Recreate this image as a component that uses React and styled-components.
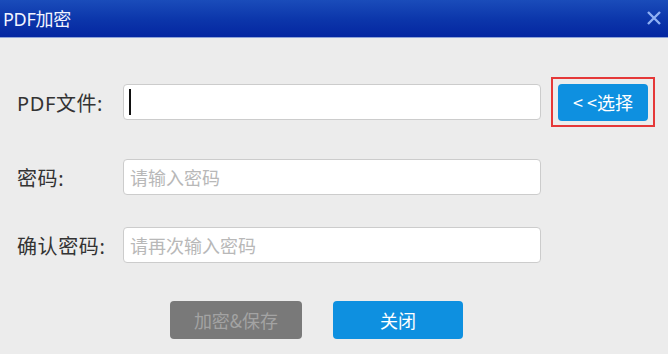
import React from "react"
import styled, { createGlobalStyle } from "styled-components"

const GlobalStyle = createGlobalStyle`
	* {
		margin: 0;
		padding: 0;
		box-sizing: border-box;
	}
	body {
		background-color: #ececec;
		font-family: "Noto Sans", "Noto Sans CJK SC", sans-serif;
	}
`

const Window = styled.div`
	display: flex;
	flex-flow: column nowrap;
	width: 668px;
	height: 354px;
	background-color: #ececec;
	overflow: hidden;
`

const TitleBar = styled.div`
	display: flex;
	align-items: center;
	justify-content: space-between;
	height: 38px;
	padding: 0 4px 1px 3px;
	background: linear-gradient(#1a4cba, #0b35aa 55%, #0426a1);
	border-bottom: 1px solid #8ea3d8;
	color: #f2f5ff;
	font-size: 18px;
`

const Title = styled.span`
	letter-spacing: -0.3px;
`

const CloseIcon = styled.svg`
	width: 16px;
	height: 16px;
	margin-right: 2px;
`

const Body = styled.div`
	display: flex;
	flex-flow: column nowrap;
	padding: 39px 0 0 17px;
`

const Form = styled.div`
	display: flex;
	flex-flow: column nowrap;
	gap: 32px;
`

const Row = styled.div`
	display: flex;
	align-items: center;
	height: ${props => (props.tall ? "50px" : "36px")};
`

const Label = styled.label`
	width: 106px;
	color: #333333;
	font-size: 20px;
	letter-spacing: 0.6px;
	white-space: nowrap;
`

const FieldWrap = styled.div`
	position: relative;
	width: 418px;
	height: 36px;
`

const Field = styled.input`
	width: 100%;
	height: 100%;
	padding: 0 6px;
	background: #ffffff;
	border: 1px solid #cccccc;
	border-radius: 4px;
	font-family: "Noto Sans CJK SC", sans-serif;
	font-size: 18px;
	outline: none;
	&::placeholder {
		color: #b8b8b8;
	}
`

const Caret = styled.span`
	position: absolute;
	left: 6px;
	top: 5px;
	width: 2px;
	height: 26px;
	background: #111111;
`

const Highlight = styled.div`
	display: flex;
	align-items: center;
	justify-content: center;
	width: 104px;
	height: 50px;
	margin-left: 10px;
	border: 2px solid #e53838;
`

const Button = styled.button`
	display: flex;
	align-items: center;
	justify-content: center;
	width: ${props => props.w}px;
	height: ${props => props.h || 38}px;
	border: none;
	border-radius: 4px;
	background: ${props => (props.disabled ? "#797979" : "#0e90e0")};
	color: ${props => (props.disabled ? "#a3a3a3" : "#ffffff")};
	font-family: "Noto Sans CJK SC", sans-serif;
	font-size: 18px;
	cursor: pointer;
`

const Buttons = styled.div`
	display: flex;
	gap: 31px;
	margin-top: 38px;
	padding-left: 153px;
`

const App = () => {
	return (
		<>
			<GlobalStyle />
			<Window>
				<TitleBar>
					<Title>PDF加密</Title>
					<CloseIcon viewBox="0 0 16 16">
						<path d="M2 2 L14 14 M14 2 L2 14" stroke="#8fb0f4" strokeWidth="2.4" strokeLinecap="butt" />
					</CloseIcon>
				</TitleBar>
				<Body>
					<Form>
						<Row tall>
							<Label>PDF文件:</Label>
							<FieldWrap>
								<Field />
								<Caret />
							</FieldWrap>
							<Highlight>
								<Button w={90} h={37}>&lt; &lt;选择</Button>
							</Highlight>
						</Row>
						<Row>
							<Label>密码:</Label>
							<FieldWrap>
								<Field type="password" placeholder="请输入密码" />
							</FieldWrap>
						</Row>
						<Row>
							<Label>确认密码:</Label>
							<FieldWrap>
								<Field type="password" placeholder="请再次输入密码" />
							</FieldWrap>
						</Row>
					</Form>
					<Buttons>
						<Button w={132} disabled>加密&amp;保存</Button>
						<Button w={130}>关闭</Button>
					</Buttons>
				</Body>
			</Window>
		</>
	)
}
export default App
